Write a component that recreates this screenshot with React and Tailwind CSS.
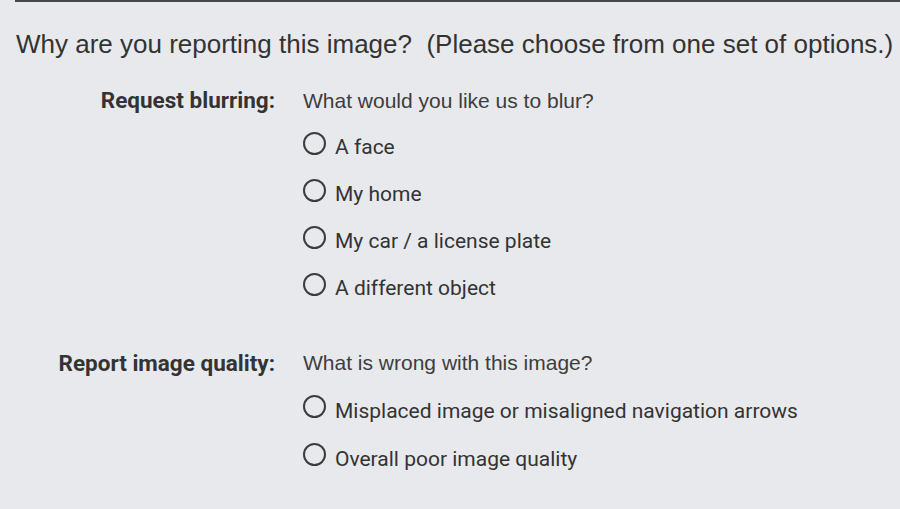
import React from "react";

function Radio({ label, rowClass }) {
  return (
    <div className={`flex items-start ${rowClass}`}>
      <span className="mt-[8px] w-[23px] h-[23px] rounded-full border-2 border-[#3c3c3c] shrink-0" />
      <span className="ml-[9px] font-['Roboto',sans-serif] text-[21px] text-[#333]">{label}</span>
    </div>
  );
}

function Section({ label, question, options, rowClass }) {
  return (
    <div className="flex">
      <div className={`w-[275px] text-right font-['Roboto',sans-serif] font-bold text-[22.5px] text-[#333] ${rowClass}`}>
        {label}
      </div>
      <div className="ml-[28px] flex flex-col">
        <div className={`font-['Liberation_Sans',Arial,sans-serif] text-[21px] text-[#3d3d3d] ${rowClass}`}>
          {question}
        </div>
        {options.map((o) => (
          <Radio key={o} label={o} rowClass={rowClass} />
        ))}
      </div>
    </div>
  );
}

export default function App() {
  return (
    <div className="w-[900px] h-[509px] bg-[#e8e9ed] overflow-hidden">
      <div className="ml-[15px] h-[2px] bg-[#48484c]" />
      <p className="pl-[16px] mt-[27px] leading-[30px] text-[26px] whitespace-nowrap font-['Liberation_Sans',Arial,sans-serif] text-[#333]">
        Why are you reporting this image?&nbsp; (Please choose from one set of options.)
      </p>
      <div className="mt-[18px]">
        <Section
          label="Request blurring:"
          question="What would you like us to blur?"
          options={["A face", "My home", "My car / a license plate", "A different object"]}
          rowClass="leading-[47px] h-[47px]"
        />
        <div className="mt-[27px]">
          <Section
            label="Report image quality:"
            question="What is wrong with this image?"
            options={["Misplaced image or misaligned navigation arrows", "Overall poor image quality"]}
            rowClass="leading-[48px] h-[48px]"
          />
        </div>
      </div>
    </div>
  );
}
